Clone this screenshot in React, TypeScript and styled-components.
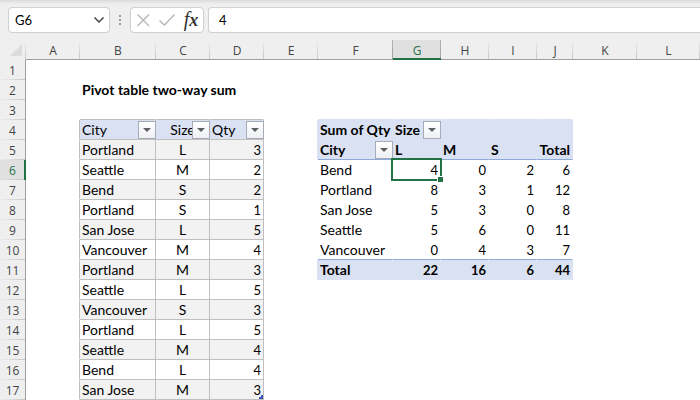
import React from "react";
import styled, { createGlobalStyle, css } from "styled-components";

const color = {
  chrome: "#efefef",
  frame: "#d0d0d0",
  divider: "#a0a0a0",
  rule: "#bfbfbf",
  band: "#f2f2f2",
  header: "#d9e1f2",
  pivotRule: "#8ea9db",
  green: "#217346",
  active: "#e0e0e0",
  heading: "#444444",
};

const GlobalStyle = createGlobalStyle`
  *, *::before, *::after { box-sizing: border-box; }
  body {
    margin: 0;
    background: #ffffff;
    color: #000000;
    font: 13px/20px Lato, Carlito, sans-serif;
    overflow: hidden;
  }
  input, button { font: inherit; color: inherit; }
`;

const FormulaBar = styled.div`
  display: flex;
  align-items: center;
  padding: 7px 0 7px 8px;
  background: linear-gradient(#dadada, ${color.chrome} 4px);
`;

const Box = styled.div`
  display: flex;
  align-items: center;
  height: 26px;
  background: #ffffff;
  border: 1px solid ${color.frame};
  border-radius: 4px;
`;

const NameBox = styled(Box)`
  width: 102px;
  padding: 0 4px 0 6px;
`;

const Actions = styled(Box)`
  width: 74px;
  margin-right: 4px;
  padding: 0 2px;
  justify-content: space-between;
`;

const FormulaBox = styled(Box)`
  flex: 1;
  padding-left: 10px;
  border-right: 0;
  border-radius: 4px 0 0 4px;
`;

const Field = styled.input`
  flex: 1;
  min-width: 0;
  padding: 0;
  border: 0;
  outline: 0;
  background: transparent;
`;

const IconButton = styled.button`
  display: flex;
  align-items: center;
  justify-content: center;
  height: 22px;
  padding: 0;
  border: 0;
  background: transparent;
`;

const FunctionButton = styled(IconButton)`
  width: 20px;
  align-items: baseline;
  color: #333333;
  font: italic 20px/20px "Liberation Serif", serif;
`;

const Variable = styled.span`
  font-size: 18px;
  font-weight: 700;
`;

const Grip = styled.svg`
  width: 20px;
  height: 26px;
`;

const Sheet = styled.table`
  width: 100%;
  table-layout: fixed;
  border-collapse: separate;
  border-spacing: 0;
`;

const Col = styled.col<{ $width?: number }>`
  width: ${(p) => (p.$width ? `${p.$width}px` : "auto")};
`;

const Heading = styled.th`
  height: 20px;
  padding: 0;
  color: ${color.heading};
  background-color: ${color.chrome};
  background-repeat: no-repeat;
  font: 12px/19px "Open Sans", "Noto Sans", sans-serif;
  text-align: center;
`;

const ColumnHeading = styled(Heading)<{ $active?: boolean; $beforeActive?: boolean }>`
  padding-top: 2px;
  line-height: 17px;
  border-bottom: 1px solid ${color.divider};
  background-image: linear-gradient(transparent, #c6c6c6);
  background-size: 1px 100%;
  background-position: right;
  ${(p) => p.$beforeActive && css`background-image: linear-gradient(#b4b4b4, #a0a0a0);`}
  ${(p) =>
    p.$active &&
    css`
      color: ${color.green};
      background-color: ${color.active};
      background-image: linear-gradient(#b4b4b4, #a0a0a0);
      border-bottom-color: ${color.green};
      box-shadow: inset 0 -1px ${color.green};
    `}
`;

const RowHeading = styled(Heading)<{ $active?: boolean }>`
  border-right: 1px solid ${color.divider};
  background-image: linear-gradient(to right, transparent, #c6c6c6);
  background-size: 100% 1px;
  background-position: bottom;
  ${(p) =>
    p.$active &&
    css`
      color: ${color.green};
      background-color: ${color.active};
      border-right-color: ${color.green};
      box-shadow: inset -1px 0 ${color.green};
    `}
`;

const Corner = styled(Heading)`
  background-image: linear-gradient(transparent, #c6c6c6);
  background-size: 1px 100%;
  background-position: right;
`;

const CornerButton = styled(IconButton)`
  width: 25px;
  height: 20px;
`;

type CellStyle = {
  $fill?: string;
  $right?: string;
  $bottom?: string;
  $align?: "left" | "center" | "right";
  $bold?: boolean;
  $number?: boolean;
};

const Cell = styled.td<CellStyle>`
  position: relative;
  height: 20px;
  padding: ${(p) => (p.$number ? 2 : 1)}px 2px 0;
  white-space: nowrap;
  font-size: ${(p) => (p.$number ? 13 : 14)}px;
  line-height: ${(p) => (p.$number ? 17 : 18)}px;
  text-align: ${(p) => p.$align ?? "left"};
  font-weight: ${(p) => (p.$bold ? 700 : 400)};
  background: ${(p) => p.$fill ?? "transparent"};
  border-right: 1px solid ${(p) => p.$right ?? p.$fill ?? "transparent"};
  border-bottom: 1px solid ${(p) => p.$bottom ?? p.$fill ?? "transparent"};
`;

const Filter = styled.button`
  position: absolute;
  right: -1px;
  bottom: 0;
  display: flex;
  align-items: center;
  justify-content: center;
  width: 18px;
  height: 18px;
  padding: 0;
  border: 1px solid #a6abb5;
  background: linear-gradient(#ffffff, #eef0f4);
`;

const Selection = styled.span`
  position: absolute;
  z-index: 1;
  inset: -2px -2px -2px -2px;
  border: 2px solid ${color.green};
  pointer-events: none;

  &::after {
    content: "";
    position: absolute;
    right: -3px;
    bottom: -3px;
    width: 6px;
    height: 6px;
    background: ${color.green};
    border: solid #ffffff;
    border-width: 1px 0 0 1px;
  }
`;

const TableHandle = styled.span`
  position: absolute;
  right: 0;
  bottom: 0;
  width: 4px;
  height: 4px;
  border: solid #3f51b5;
  border-width: 0 2px 2px 0;
`;

const columns: [string, number?][] = [
  ["A", 54], ["B", 76], ["C", 54], ["D", 54], ["E", 54], ["F", 75],
  ["G", 48], ["H", 48], ["I", 48], ["J", 36], ["K", 64], ["L"],
];

const orders: [string, string, number][] = [
  ["Portland", "L", 3],
  ["Seattle", "M", 2],
  ["Bend", "S", 2],
  ["Portland", "S", 1],
  ["San Jose", "L", 5],
  ["Vancouver", "M", 4],
  ["Portland", "M", 3],
  ["Seattle", "L", 5],
  ["Vancouver", "S", 3],
  ["Portland", "L", 5],
  ["Seattle", "M", 4],
  ["Bend", "L", 4],
  ["San Jose", "M", 3],
];

const pivot: Record<number, (string | number)[]> = {
  4: ["Sum of Qty", "Size", "", "", ""],
  5: ["City", "L", "M", "S", "Total"],
  6: ["Bend", 4, 0, 2, 6],
  7: ["Portland", 8, 3, 1, 12],
  8: ["San Jose", 5, 3, 0, 8],
  9: ["Seattle", 5, 6, 0, 11],
  10: ["Vancouver", 0, 4, 3, 7],
  11: ["Total", 22, 16, 6, 44],
};

const rowNumbers = Array.from({ length: 17 }, (_, i) => i + 1);

function FilterButton({ field }: { field: string }) {
  return (
    <Filter aria-label={`Filter ${field}`}>
      <svg width="8" height="4" viewBox="0 0 8 4">
        <path d="M0 0h8L4 4z" fill="#606060" />
      </svg>
    </Filter>
  );
}

function SourceCells({ row }: { row: number }) {
  if (row === 3) {
    return (
      <>
        <Cell />
        <Cell $bottom={color.rule} />
        <Cell $bottom={color.rule} />
        <Cell $bottom={color.rule} />
      </>
    );
  }
  if (row === 4) {
    const head = { $fill: color.header, $right: color.rule, $bottom: color.rule };
    return (
      <>
        <Cell $right={color.rule} />
        <Cell {...head}>City<FilterButton field="City" /></Cell>
        <Cell {...head} $align="center">Size<FilterButton field="Size" /></Cell>
        <Cell {...head}>Qty<FilterButton field="Qty" /></Cell>
      </>
    );
  }
  const order = orders[row - 5];
  if (!order) {
    return row === 2 ? (
      <>
        <Cell />
        <Cell $bold>Pivot table two-way sum</Cell>
        <Cell />
        <Cell />
      </>
    ) : (
      <>
        <Cell /><Cell /><Cell /><Cell />
      </>
    );
  }
  const body = {
    $fill: row % 2 ? color.band : undefined,
    $right: color.rule,
    $bottom: color.rule,
  };
  return (
    <>
      <Cell $right={color.rule} />
      <Cell {...body}>{order[0]}</Cell>
      <Cell {...body} $align="center">{order[1]}</Cell>
      <Cell {...body} $align="right" $number>
        {order[2]}
        {row === 17 && <TableHandle />}
      </Cell>
    </>
  );
}

function PivotCells({ row }: { row: number }) {
  const values = pivot[row] ?? ["", "", "", "", ""];
  const heading = row === 4 || row === 5;
  const shaded = heading || row === 11;
  const fill = shaded ? color.header : undefined;
  const bottom =
    row === 3 ? color.header : row === 5 || row === 10 ? color.pivotRule : undefined;
  return (
    <>
      <Cell $right={fill} />
      {values.map((value, i) => (
        <Cell
          key={i}
          $fill={fill}
          $bottom={bottom}
          $bold={shaded}
          $number={typeof value === "number"}
          $align={i > 0 && (!heading || i === 4) ? "right" : "left"}
        >
          {value}
          {row === 4 && i === 1 && <FilterButton field="Size" />}
          {row === 5 && i === 0 && <FilterButton field="City" />}
          {row === 6 && i === 1 && <Selection />}
        </Cell>
      ))}
      <Cell />
      <Cell />
    </>
  );
}

export default function App() {
  return (
    <>
      <GlobalStyle />
      <FormulaBar>
        <NameBox>
          <Field aria-label="Name box" defaultValue="G6" />
          <IconButton aria-label="Show names">
            <svg width="12" height="8" viewBox="0 0 12 8" fill="none">
              <path d="M1.5 1.5 6 6l4.500-4.500" stroke="#444" strokeWidth="1.500" />
            </svg>
          </IconButton>
        </NameBox>
        <Grip viewBox="0 0 20 26" fill="#9a9a9a">
          <path d="M9 8h2v2H9zM9 12h2v2H9zM9 16h2v2H9z" />
        </Grip>
        <Actions>
          <IconButton aria-label="Cancel">
            <svg width="20" height="16" viewBox="0 0 20 16" fill="none">
              <path d="m4.500 2.500 11.500 11.500m0-11.500-11.500 11.500" stroke="#b5b5b5" strokeWidth="1.300" />
            </svg>
          </IconButton>
          <IconButton aria-label="Enter">
            <svg width="20" height="16" viewBox="0 0 20 16" fill="none">
              <path d="m2.500 8.500 5 4.500L17.500 2.500" stroke="#b5b5b5" strokeWidth="1.300" />
            </svg>
          </IconButton>
          <FunctionButton aria-label="Insert function">
            f<Variable>x</Variable>
          </FunctionButton>
        </Actions>
        <FormulaBox>
          <Field aria-label="Formula" defaultValue="4" />
        </FormulaBox>
      </FormulaBar>
      <Sheet>
        <colgroup>
          <Col $width={26} />
          {columns.map(([name, width]) => (
            <Col key={name} $width={width} />
          ))}
        </colgroup>
        <thead>
          <tr>
            <Corner>
              <CornerButton aria-label="Select all">
                <svg width="25" height="20" viewBox="0 0 25 20">
                  <path d="M22 4v12H10z" fill="#dcdcdc" />
                </svg>
              </CornerButton>
            </Corner>
            {columns.map(([name]) => (
              <ColumnHeading
                key={name}
                scope="col"
                $active={name === "G"}
                $beforeActive={name === "F"}
              >
                {name}
              </ColumnHeading>
            ))}
          </tr>
        </thead>
        <tbody>
          {rowNumbers.map((row) => (
            <tr key={row}>
              <RowHeading scope="row" $active={row === 6}>
                {row}
              </RowHeading>
              <SourceCells row={row} />
              <PivotCells row={row} />
            </tr>
          ))}
        </tbody>
      </Sheet>
    </>
  );
}
